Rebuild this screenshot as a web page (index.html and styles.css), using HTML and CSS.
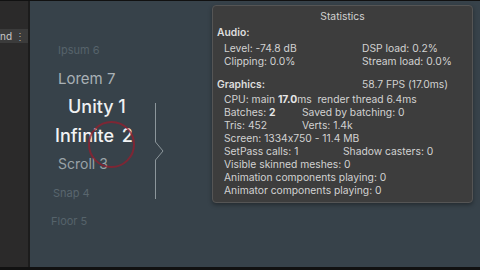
FILE: index.html
```html
<!DOCTYPE html>
<html lang="en">
<head>
    <meta charset="UTF-8">
    <title>Infinite Scroll - Statistics</title>
    <link rel="stylesheet" href="styles.css">
</head>
<body>
    <div class="editor">
        <div class="side">
            <div class="side-bar">
                <span class="side-label">nd</span>
                <span class="side-menu">&#8942;</span>
            </div>
        </div>
        <div class="split"></div>
        <div class="game">
            <div class="wheel">
                <div class="item ipsum">Ipsum 6</div>
                <div class="item lorem">Lorem 7</div>
                <div class="item unity">Unity 1</div>
                <div class="item infinite">Infinite 2</div>
                <div class="item scroll">Scroll 3</div>
                <div class="item snap">Snap 4</div>
                <div class="item floor">Floor 5</div>
                <div class="touch"></div>
            </div>
            <div class="rail">
                <svg width="12" height="96" viewBox="0 0 12 96">
                    <path d="M1.5 0 V39 L9 48 L1.5 57 V96" fill="none" stroke="#8c969b" stroke-width="1"/>
                </svg>
            </div>
            <div class="stats">
                <div class="stats-title">Statistics</div>
                <div class="head">Audio:</div>
                <div class="row gap-sm"><span class="col-a">Level: -74.8 dB</span><span>DSP load: 0.2%</span></div>
                <div class="row"><span class="col-a">Clipping: 0.0%</span><span>Stream load: 0.0%</span></div>
                <div class="head-row"><span class="head col-head">Graphics:</span><span>58.7 FPS (17.0ms)</span></div>
                <div class="row gap-xs"><span>CPU: main <b>17.0</b>ms&nbsp; render thread 6.4ms</span></div>
                <div class="row"><span class="col-b">Batches: <b>2</b></span><span>Saved by batching: 0</span></div>
                <div class="row"><span class="col-b">Tris: 452</span><span>Verts: 1.4k</span></div>
                <div class="row">Screen: 1334x750 - 11.4 MB</div>
                <div class="row"><span class="col-c">SetPass calls: 1</span><span>Shadow casters: 0</span></div>
                <div class="row">Visible skinned meshes: 0</div>
                <div class="row">Animation components playing: 0</div>
                <div class="row">Animator components playing: 0</div>
            </div>
        </div>
    </div>
</body>
</html>
```

FILE: styles.css
```css
body {
    margin: 0;
    width: 480px;
    height: 270px;
    overflow: hidden;
    background: #111;
    font-family: Inter, "Noto Sans", sans-serif;
    font-feature-settings: "calt" 0;
}
.editor {
    display: flex;
    height: 266px;
    margin-top: 1px;
}
.side {
    width: 28px;
    background: #2b2a2a;
    padding-top: 28px;
}
.side-bar {
    height: 14px;
    background: #3b3b3b;
    display: flex;
    align-items: center;
    gap: 3px;
    color: #c8c8c8;
    font-size: 10px;
}
.side-menu {
    font-size: 10px;
    color: #aaa;
}
.split {
    width: 2px;
    background: #1c1c1c;
}
.game {
    flex: 1;
    display: flex;
    background: #37424a;
}
.wheel {
    position: relative;
    width: 124px;
    display: flex;
    flex-direction: column;
    padding-top: 40px;
}
.item {
    height: 28.5px;
    line-height: 18px;
    white-space: nowrap;
}
.ipsum { margin-left: 28px; font-size: 11px; color: #56636b; }
.lorem { margin-left: 28px; font-size: 15px; color: #a9b1b6; }
.unity { margin-left: 38px; font-size: 18px; color: #eef0f1; font-weight: 500; }
.infinite { margin-left: 25px; font-size: 18px; color: #f2f3f4; font-weight: 500; word-spacing: 3px; }
.scroll { margin-left: 28px; font-size: 14px; color: #9aa3a8; }
.snap { margin-left: 23px; font-size: 11px; color: #59666e; }
.floor { margin-left: 21px; font-size: 11px; color: #56636b; }
.touch {
    position: absolute;
    left: 58px;
    top: 120px;
    width: 43px;
    height: 43px;
    border: 2px solid rgba(150, 30, 45, 0.75);
    border-radius: 50%;
}
.rail {
    padding-top: 102px;
    width: 58px;
}
.stats {
    align-self: flex-start;
    margin-top: 4px;
    width: 251px;
    background: #3d3d3d;
    border: 1px solid #555;
    border-radius: 4px;
    padding: 0 4px 5px 4px;
    color: #d2d2d2;
    font-size: 10.3px;
    line-height: 13px;
    box-shadow: 0 2px 4px rgba(0, 0, 0, 0.35);
}
.stats-title {
    text-align: center;
    line-height: 20px;
}
.head {
    font-weight: 600;
    color: #dedede;
}
.row {
    display: flex;
    padding-left: 7px;
    white-space: nowrap;
}
.row b {
    font-weight: 700;
    color: #e6e6e6;
}
.gap-sm { margin-top: 3px; }
.gap-xs { margin-top: 2px; }
.head-row {
    display: flex;
    margin-top: 10px;
}
.col-head { width: 145px; }
.col-a { width: 138px; }
.col-b { width: 78px; }
.col-c { width: 119px; }
```
